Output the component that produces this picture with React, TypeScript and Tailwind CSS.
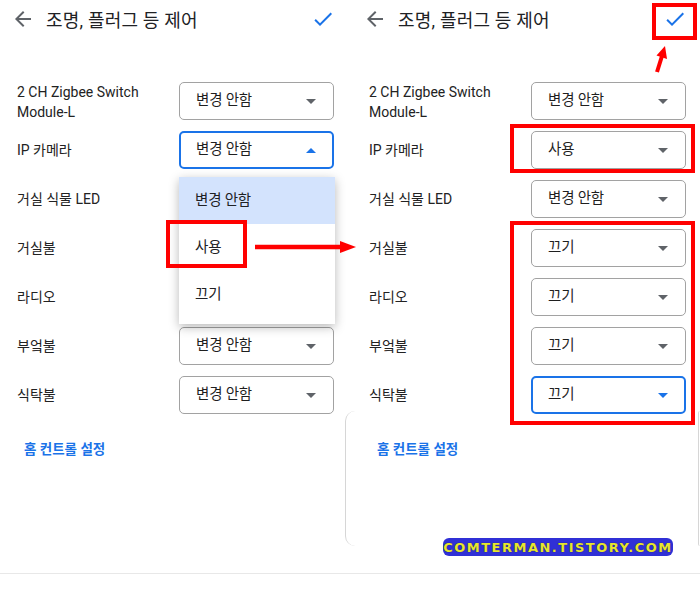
type Row = {
  label: string[];
  value: string;
  focus?: boolean;
  open?: boolean;
};

const LEFT_ROWS: Row[] = [
  { label: ['2 CH Zigbee Switch', 'Module-L'], value: '변경 안함' },
  { label: ['IP 카메라'], value: '변경 안함', focus: true, open: true },
  { label: ['거실 식물 LED'], value: '변경 안함' },
  { label: ['거실불'], value: '변경 안함' },
  { label: ['라디오'], value: '변경 안함' },
  { label: ['부엌불'], value: '변경 안함' },
  { label: ['식탁불'], value: '변경 안함' },
];

const RIGHT_ROWS: Row[] = [
  { label: ['2 CH Zigbee Switch', 'Module-L'], value: '변경 안함' },
  { label: ['IP 카메라'], value: '사용' },
  { label: ['거실 식물 LED'], value: '변경 안함' },
  { label: ['거실불'], value: '끄기' },
  { label: ['라디오'], value: '끄기' },
  { label: ['부엌불'], value: '끄기' },
  { label: ['식탁불'], value: '끄기', focus: true },
];

const MENU = ['변경 안함', '사용', '끄기'];

function BackIcon() {
  return (
    <svg width="24" height="24" viewBox="0 0 24 24" fill="#5f6368">
      <path d="M20 11H7.83l5.59-5.59L12 4l-8 8 8 8 1.41-1.41L7.83 13H20v-2z" />
    </svg>
  );
}

function CheckIcon() {
  return (
    <svg width="24" height="24" viewBox="0 0 24 24" fill="#1a73e8">
      <path d="M9 16.17L4.83 12l-1.42 1.41L9 19 21 7l-1.41-1.41z" />
    </svg>
  );
}

function Caret({ up, blue }: { up?: boolean; blue?: boolean }) {
  return (
    <svg width="10" height="5" viewBox="0 0 10 5" fill={blue ? '#1a73e8' : '#5f6368'}>
      {up ? <path d="M0 5 L10 5 L5 0z" /> : <path d="M0 0 L10 0 L5 5z" />}
    </svg>
  );
}

function Dropdown({ row }: { row: Row }) {
  return (
    <div className="relative w-[155px] h-[38px]">
      <div
        className={
          row.focus
            ? 'flex items-center justify-between h-full rounded-[5px] border-2 border-[#1a73e8] pl-[15px] pr-[16px]'
            : 'flex items-center justify-between h-full rounded-[5px] border border-[#a2a2a2] pl-[16px] pr-[17px]'
        }
      >
        <span className="text-[14.5px] tracking-[-0.2px] text-[#1f1f1f]">{row.value}</span>
        <Caret up={row.open} blue={row.focus} />
      </div>

      {row.open && (
        <div className="absolute top-[46px] left-0 z-10 w-[156px] bg-white shadow-[0_3px_10px_rgba(0,0,0,0.28)]">
          {MENU.map((item, i) => (
            <div
              key={item}
              className={
                i === 0
                  ? 'flex items-center h-[47px] pl-[16px] bg-[#d3e3fd] text-[14.5px] tracking-[-0.2px]'
                  : 'flex items-center h-[47px] pl-[16px] text-[14.5px] tracking-[-0.2px]'
              }
            >
              {item}
            </div>
          ))}
          <div className="h-[6px]" />
        </div>
      )}
    </div>
  );
}

function HomeLink() {
  return (
    <span className="text-[13.5px] leading-[18px] font-semibold text-[#1a73e8]">홈 컨트롤 설정</span>
  );
}

function Panel({ rows, right }: { rows: Row[]; right?: boolean }) {
  return (
    <div className={right ? 'flex flex-col w-[355px]' : 'flex flex-col w-[345px]'}>
      <div className={right ? 'w-[345px] ml-[7px]' : 'w-[345px]'}>
        {/* header */}
        <div className="flex items-center h-[38px] pl-[11px] pr-[10px]">
          <BackIcon />
          <span className="ml-[11px] pt-[3px] text-[18px] tracking-[0.2px] text-[#202124]">
            조명, 플러그 등 제어
          </span>
          <div className="ml-auto">
            <CheckIcon />
          </div>
        </div>

        {/* rows */}
        <div className="mt-[44px] flex flex-col gap-[11px]">
          {rows.map((row, i) => (
            <div key={i} className="flex h-[38px]">
              <div
                className={
                  row.label.length > 1
                    ? 'w-[179px] pl-[17px] self-start text-[14px] leading-[20px] text-[#222]'
                    : 'w-[179px] pl-[17px] self-center text-[14px] text-[#222]'
                }
              >
                {row.label.map((l) => (
                  <div key={l}>{l}</div>
                ))}
              </div>
              <Dropdown row={row} />
            </div>
          ))}
        </div>
      </div>

      {right ? (
        <div className="flex -mt-[3px]">
          <div className="w-[353px] h-[135px] border-l border-[#d6d6d6] rounded-l-[10px] pl-[31px] pt-[26px]">
            <HomeLink />
          </div>
          <div className="w-[2px] h-[135px] border-l border-[#d6d6d6] rounded-l-[10px]" />
        </div>
      ) : (
        <div className="pl-[24px] pt-[23px]">
          <HomeLink />
        </div>
      )}
    </div>
  );
}

export default function App() {
  return (
    <div className="relative w-[700px] h-[590px] bg-white overflow-hidden font-['Roboto','Noto_Sans_CJK_KR',sans-serif] text-[#202124]">
      <div className="flex h-[574px] border-b border-[#e8e8e8]">
        <Panel rows={LEFT_ROWS} />
        <Panel rows={RIGHT_ROWS} right />
      </div>

      {/* red annotations */}
      <div className="absolute left-[166px] top-[220px] w-[81px] h-[48px] border-[4px] border-[#ff0000] z-20" />
      <div className="absolute left-[652px] top-[3px] w-[45px] h-[37px] border-[4px] border-[#ff0000] z-20" />
      <div className="absolute left-[510px] top-[124px] w-[185px] h-[49px] border-[4px] border-[#ff0000] z-20" />
      <div className="absolute left-[510px] top-[221px] w-[185px] h-[204px] border-[4px] border-[#ff0000] z-20" />

      <svg className="absolute inset-0 z-20 pointer-events-none" width="700" height="590">
        <line x1="255" y1="247" x2="341" y2="247" stroke="#ff0000" strokeWidth="4.5" />
        <polygon points="356,247 340,241 340,253" fill="#ff0000" />
        <line x1="657" y1="72" x2="662" y2="56" stroke="#ff0000" strokeWidth="4" />
        <polygon points="665,46 667,59 656.5,55.5" fill="#ff0000" />
      </svg>

      {/* watermark */}
      <div className="absolute left-[443px] top-[538px] w-[230px] h-[18px] z-20 flex items-center justify-center rounded-[6px] bg-[#3030d6]">
        <span className="font-['DejaVu_Sans',sans-serif] font-bold text-[13px] leading-none tracking-[1.5px] text-[#e6e630] [text-shadow:0_0_1px_#202020]">
          COMTERMAN.TISTORY.COM
        </span>
      </div>
    </div>
  );
}
